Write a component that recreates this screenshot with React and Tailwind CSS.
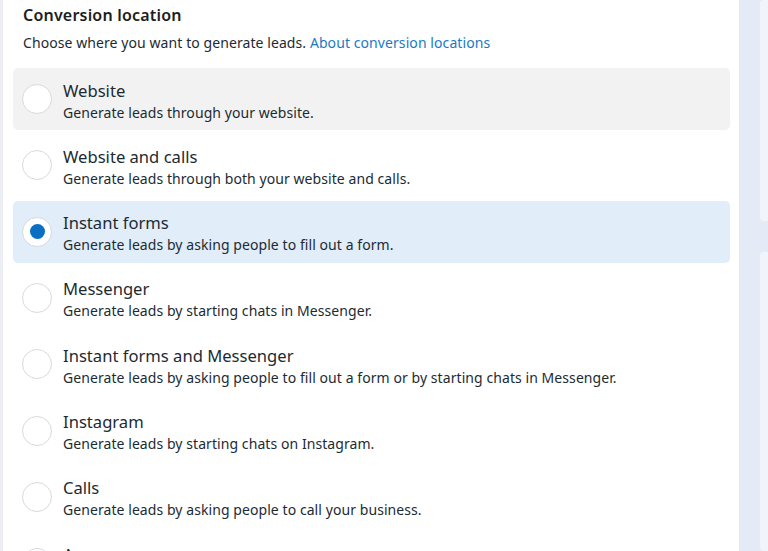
import React from "react";

const options = [
  { title: "Website", desc: "Generate leads through your website.", state: "hover" },
  { title: "Website and calls", desc: "Generate leads through both your website and calls." },
  { title: "Instant forms", desc: "Generate leads by asking people to fill out a form.", state: "selected" },
  { title: "Messenger", desc: "Generate leads by starting chats in Messenger." },
  { title: "Instant forms and Messenger", desc: "Generate leads by asking people to fill out a form or by starting chats in Messenger." },
  { title: "Instagram", desc: "Generate leads by starting chats on Instagram." },
  { title: "Calls", desc: "Generate leads by asking people to call your business." },
  { title: "App", desc: "Generate leads through your app." },
];

function Radio({ checked }) {
  return (
    <div className="w-[30px] h-[30px] shrink-0 rounded-full bg-white border border-[#d6dadf] flex items-center justify-center">
      {checked && <div className="w-[15px] h-[15px] rounded-full bg-[#0a6fc2]" />}
    </div>
  );
}

export default function App() {
  return (
    <div
      className="w-[768px] h-[551px] overflow-hidden flex bg-[#e4eaf6]"
      style={{ fontFamily: "'Noto Sans', Roboto, sans-serif" }}
    >
      <div className="w-[3px] shrink-0 bg-[#eceef3]" />
      <div className="w-[736px] shrink-0 bg-white pl-[10px] pr-[9px] flex flex-col">
        <div className="pl-[10px] pt-[4px]">
          <div className="text-[16px] leading-[22px] font-semibold tracking-[0.2px] text-[#1c1e21]">Conversion location</div>
          <div className="mt-[8px] text-[14px] leading-[18px] tracking-[0.08px] text-[#1c2b33]">
            Choose where you want to generate leads.{" "}
            <span className="text-[#1a7ac6]">About conversion locations</span>
          </div>
        </div>
        <div className="mt-[16px] flex flex-col gap-[4.33px]">
          {options.map((o) => (
            <div
              key={o.title}
              className={`h-[62px] shrink-0 rounded-[5px] flex items-center pl-[9px] gap-[11px] ${
                o.state === "hover" ? "bg-[#f2f2f2]" : o.state === "selected" ? "bg-[#e1edf8]" : "bg-white"
              }`}
            >
              <Radio checked={o.state === "selected"} />
              <div className="flex flex-col pt-[4px]">
                <div className="text-[16.6px] leading-[22px] text-[#1c2b33]">{o.title}</div>
                <div className="mt-[1px] text-[14px] leading-[20px] tracking-[0.07px] text-[#1c2b33]">{o.desc}</div>
              </div>
            </div>
          ))}
        </div>
      </div>
      <div className="flex-1 flex flex-col pl-[21px] gap-[31px]">
        <div className="h-[221px] bg-[#f1f4fb] rounded-l-[4px]" />
        <div className="flex-1 bg-[#f1f4fb] rounded-l-[4px]" />
      </div>
    </div>
  );
}
